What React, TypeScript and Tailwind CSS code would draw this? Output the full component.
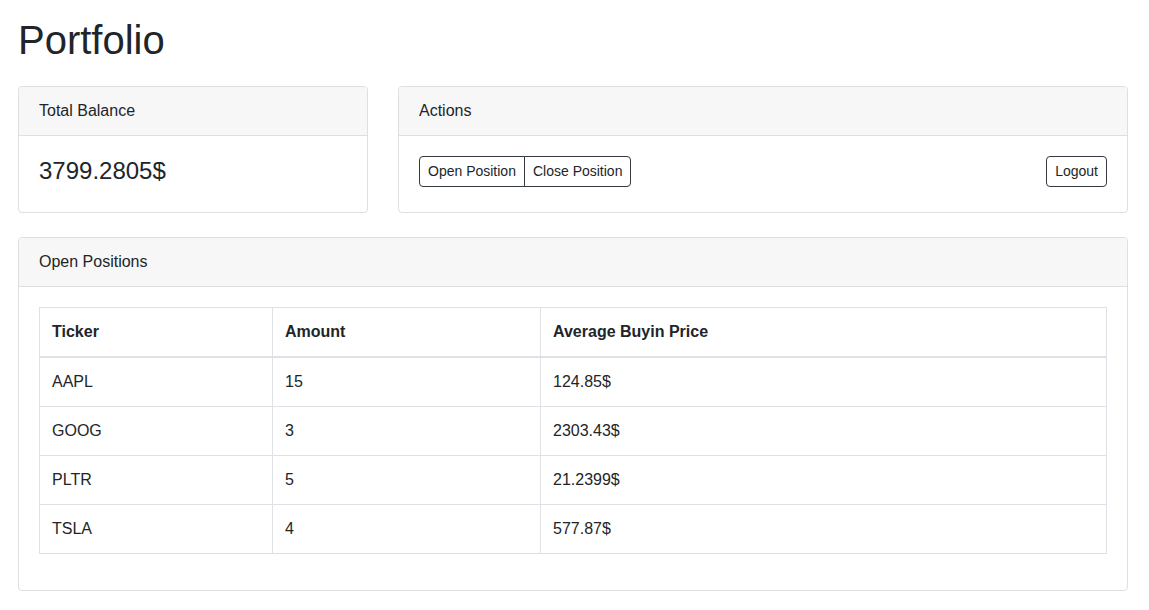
import React from "react";

const positions = [
  { ticker: "AAPL", amount: 15, price: "124.85$" },
  { ticker: "GOOG", amount: 3, price: "2303.43$" },
  { ticker: "PLTR", amount: 5, price: "21.2399$" },
  { ticker: "TSLA", amount: 4, price: "577.87$" },
];

const Card = ({
  title,
  className,
  bodyClassName,
  children,
}: {
  title: string;
  className?: string;
  bodyClassName?: string;
  children: React.ReactNode;
}) => (
  <div className={`flex flex-col rounded border border-[#dfdfdf] bg-white ${className ?? ""}`}>
    <div className="rounded-t border-b border-[#dfdfdf] bg-[#f7f7f7] px-5 py-3 leading-6">
      {title}
    </div>
    <div className={`flex-1 p-5 ${bodyClassName ?? ""}`}>{children}</div>
  </div>
);

const App = () => {
  return (
    <div
      className="min-h-screen bg-white px-[18px] pt-4 text-base text-[#212529]"
      style={{ fontFamily: '"Liberation Sans", Arial, sans-serif' }}
    >
      <h1 className="mb-[22px] text-[40px] leading-[48px] font-medium">Portfolio</h1>

      <div className="flex w-[1110px] gap-[30px]">
        {/* Total balance */}
        <Card title="Total Balance" className="w-[350px]">
          <div className="mb-[7px] text-2xl leading-[29px]">3799.2805$</div>
        </Card>

        {/* Actions */}
        <Card title="Actions" className="flex-1" bodyClassName="flex items-start justify-between">
          <div className="flex">
            <button className="rounded-l border border-[#343a40] px-2 py-1 text-sm leading-[21px]">
              Open Position
            </button>
            <button className="-ml-px rounded-r border border-[#343a40] px-2 py-1 text-sm leading-[21px]">
              Close Position
            </button>
          </div>
          <button className="rounded border border-[#343a40] px-2 py-1 text-sm leading-[21px]">
            Logout
          </button>
        </Card>
      </div>

      {/* Open positions */}
      <Card title="Open Positions" className="mt-6 w-[1110px]" bodyClassName="pb-[36px]">
        <table className="w-full border-collapse border border-[#dee2e6] text-left">
          <thead>
            <tr>
              <th className="w-[233px] border border-b-2 border-[#dee2e6] px-3 py-3 leading-6 font-bold">
                Ticker
              </th>
              <th className="w-[268px] border border-b-2 border-[#dee2e6] px-3 py-3 leading-6 font-bold">
                Amount
              </th>
              <th className="border border-b-2 border-[#dee2e6] px-3 py-3 leading-6 font-bold">
                Average Buyin Price
              </th>
            </tr>
          </thead>
          <tbody>
            {positions.map((p) => (
              <tr key={p.ticker}>
                <td className="border border-[#dee2e6] px-3 py-3 leading-6">{p.ticker}</td>
                <td className="border border-[#dee2e6] px-3 py-3 leading-6">{p.amount}</td>
                <td className="border border-[#dee2e6] px-3 py-3 leading-6">{p.price}</td>
              </tr>
            ))}
          </tbody>
        </table>
      </Card>
    </div>
  );
};

export default App;
